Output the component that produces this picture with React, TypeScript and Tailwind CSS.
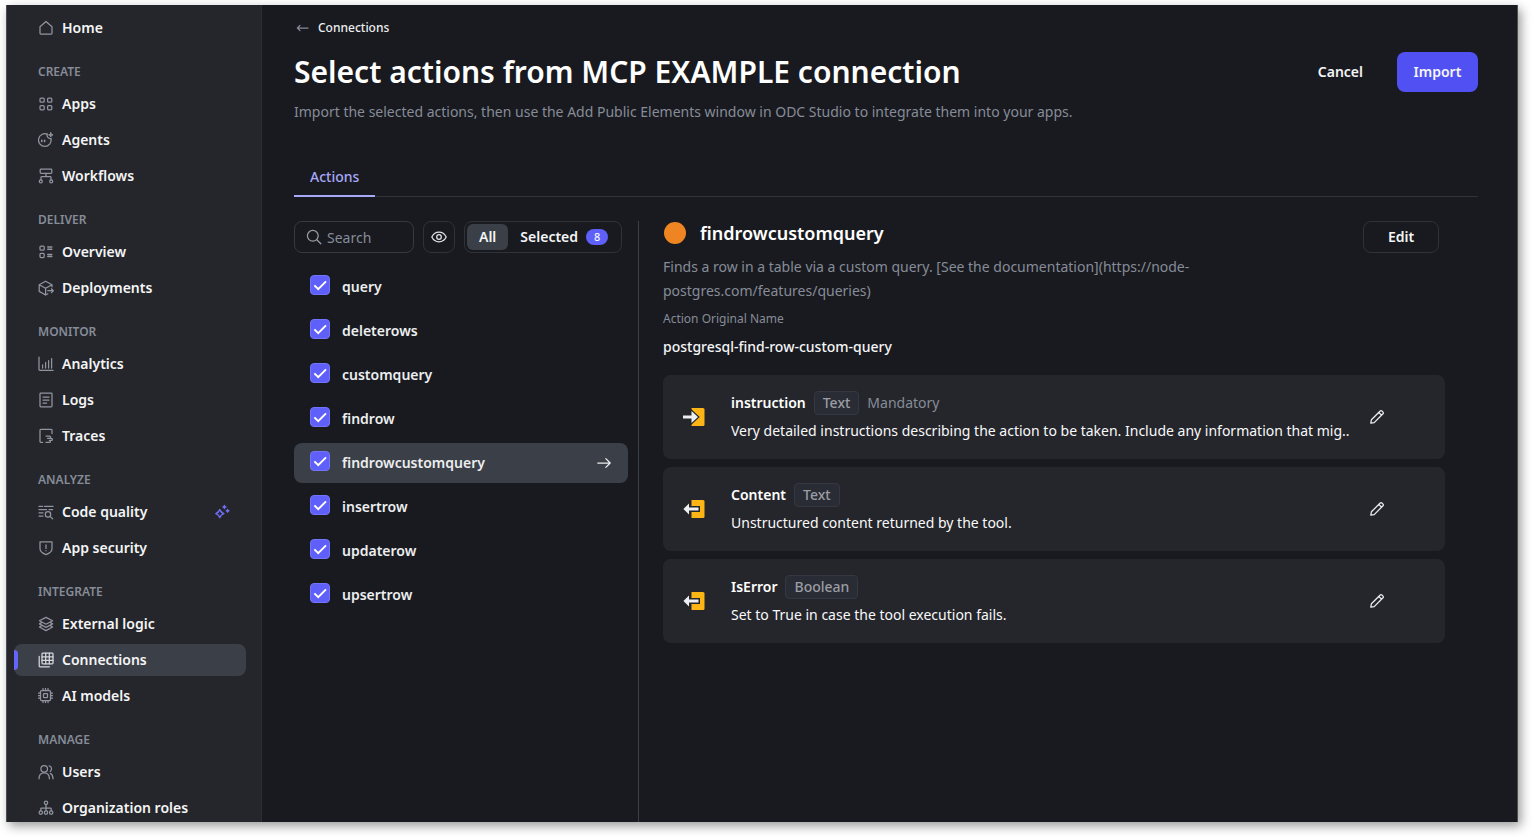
import { useState } from "react";
import type { ReactNode } from "react";

type IconProps = { children: ReactNode; className?: string };

function Icon({ children, className = "size-4" }: IconProps) {
  return (
    <svg
      viewBox="0 0 16 16"
      fill="none"
      stroke="currentColor"
      strokeWidth="1.25"
      strokeLinecap="round"
      strokeLinejoin="round"
      aria-hidden="true"
      className={`shrink-0 ${className}`}
    >
      {children}
    </svg>
  );
}

const icons: Record<string, ReactNode> = {
  home: <path d="M2 6.800 8 1.500l6 5.300v6.400a.8.8 0 0 1-.8.8H2.800a.8.8 0 0 1-.8-.8z" />,
  apps: (
    <>
      <rect x="2" y="2" width="4.2" height="4.2" rx="1" />
      <rect x="9.6" y="2" width="4.2" height="4.2" rx="1" />
      <rect x="2" y="9.6" width="4.2" height="4.2" rx="1" />
      <rect x="9.6" y="9.6" width="4.2" height="4.2" rx="1" />
    </>
  ),
  agents: (
    <>
      <path d="M9.200 2.200A6.300 6.300 0 1 0 13 6.800" />
      <path d="M3.800 8.200v1.400M6.600 8.200v1.400" strokeWidth="1.600" />
      <path d="M12.800 0.600l.7 1.600 1.600.7-1.600.7-.7 1.600-.7-1.600-1.600-.7 1.600-.7z" fill="currentColor" strokeWidth="0.800" />
      <path d="M9.200 2.200c-.8 2 .6 4.200 3.800 4.600" />
    </>
  ),
  workflows: (
    <>
      <rect x="2.2" y="1.2" width="11.6" height="4.2" rx="0.8" />
      <path d="M8 5.400v3.200M3 12V9.400a.8.8 0 0 1 .8-.8h8.400a.8.8 0 0 1 .8.800V12" />
      <circle cx="2.800" cy="13.400" r="1.500" />
      <circle cx="13.200" cy="13.400" r="1.500" />
    </>
  ),
  overview: (
    <>
      <rect x="2" y="2" width="4.2" height="4.2" rx="1" />
      <rect x="2" y="9.400" width="4.2" height="4.2" rx="1" />
      <path d="M9.800 3h4M9.800 5.200h4M9.800 10.400h4M9.800 12.600h4" strokeWidth="1.500" />
    </>
  ),
  deployments: (
    <>
      <path d="M14 6.800V4.800L7.600 1.200 1.200 4.800v6.600l6.400 3.600 2.200-1.200M1.200 4.800l6.400 3.500L14 4.800M7.600 8.300V15" />
      <path d="M9.800 10.700h5.400M13.400 8.800l1.900 1.900-1.900 1.900" />
    </>
  ),
  analytics: <path d="M1 1.200v12.400a.8.8 0 0 0 .8.800H15M4.600 12V8.800M7.600 12V6.400M10.600 12V4.600M13.600 12V2.600" />,
  logs: (
    <>
      <rect x="2" y="1.200" width="12" height="13.600" rx="0.800" />
      <path d="M5 5h6M5 8h6M5 11h3.600" />
    </>
  ),
  traces: (
    <>
      <path d="M4.600 14.400H2.800a.8.8 0 0 1-.8-.8V2.200a.8.8 0 0 1 .8-.8h10.400a.8.8 0 0 1 .8.800v3.400" />
      <path d="M8 8h3.400a1.200 1.200 0 0 1 0 2.400H9.600M11.400 10.400h2a1 1 0 0 1 0 2h-2M8 14.400h3.400a1 1 0 0 0 0-2" />
    </>
  ),
  quality: (
    <>
      <path d="M1 2.400h3.600M6.600 2.400H15M1 5.600h7.600M11 5.600h3.600M1 8.800h4M1 12h4" />
      <circle cx="10" cy="10.400" r="2.700" />
      <path d="m12 12.400 2.600 2.400" />
    </>
  ),
  security: (
    <>
      <path d="M2 1.800h12v6.800c0 3-2.400 4.800-6 6-3.600-1.200-6-3-6-6z" />
      <path d="M8 4.800v3.600M8 10.600v.2" />
    </>
  ),
  logic: (
    <path d="M8 1.400 14.600 4.800 8 8.200 1.400 4.800zM3.600 6.600 1.400 7.900 8 11.400l6.600-3.500-2.200-1.300M3.600 9.800l-2.200 1.200L8 14.600l6.600-3.600-2.200-1.200" />
  ),
  connections: (
    <>
      <rect x="4" y="1.200" width="11" height="10.600" rx="0.800" />
      <path d="M4 4.800h11M4 8.300h11M7.700 1.200v10.600M11.300 1.200v10.600M1.200 4.400v9.600a.8.8 0 0 0 .8.800h9.400" />
    </>
  ),
  models: (
    <>
      <rect x="2.500" y="2.500" width="10" height="10" rx="1" />
      <rect x="5.500" y="5.500" width="4" height="4" rx="0.600" />
      <path d="M5 .5v2M7.500.5v2M10 .5v2M5 12.500v2M7.500 12.500v2M10 12.500v2M.5 5h2M.5 7.500h2M.5 10h2M12.500 5h2M12.500 7.500h2M12.500 10h2" />
    </>
  ),
  users: (
    <>
      <circle cx="6.200" cy="4.800" r="3.300" />
      <path d="M1 14.800c0-4 2-6 5.200-6s5.200 2 5.200 6M11.200 1.800c2.400.4 3.400 3.800 1 5.600M12.400 9.400c1.600.8 2.600 2.400 2.600 5.400" />
    </>
  ),
  roles: (
    <>
      <circle cx="8" cy="2.800" r="1.700" />
      <path d="M8 4.600v6M2.800 10.600V9a.8.800 0 0 1 .8-.8h8.800a.8.800 0 0 1 .8.800v1.600" />
      <circle cx="2.800" cy="12.600" r="1.700" />
      <circle cx="8" cy="12.600" r="1.700" />
      <circle cx="13.200" cy="12.600" r="1.700" />
    </>
  ),
};

type NavItem = { label: string; icon: string; sparkle?: boolean };
type NavGroup = { title?: string; items: NavItem[] };

const groups: NavGroup[] = [
  { items: [{ label: "Home", icon: "home" }] },
  {
    title: "CREATE",
    items: [
      { label: "Apps", icon: "apps" },
      { label: "Agents", icon: "agents" },
      { label: "Workflows", icon: "workflows" },
    ],
  },
  {
    title: "DELIVER",
    items: [
      { label: "Overview", icon: "overview" },
      { label: "Deployments", icon: "deployments" },
    ],
  },
  {
    title: "MONITOR",
    items: [
      { label: "Analytics", icon: "analytics" },
      { label: "Logs", icon: "logs" },
      { label: "Traces", icon: "traces" },
    ],
  },
  {
    title: "ANALYZE",
    items: [
      { label: "Code quality", icon: "quality", sparkle: true },
      { label: "App security", icon: "security" },
    ],
  },
  {
    title: "INTEGRATE",
    items: [
      { label: "External logic", icon: "logic" },
      { label: "Connections", icon: "connections" },
      { label: "AI models", icon: "models" },
    ],
  },
  {
    title: "MANAGE",
    items: [
      { label: "Users", icon: "users" },
      { label: "Organization roles", icon: "roles" },
    ],
  },
];

function Sidebar() {
  return (
    <nav
      aria-label="Main"
      className="w-64 shrink-0 overflow-hidden border-x border-l-[#4b4e54] border-r-[#2c2e34] bg-[#25262b] pt-[7px] pr-[15px] pl-[7px]"
    >
      {groups.map((group) => (
        <section key={group.title ?? "top"}>
          {group.title && (
            <h2 className="mt-3 flex h-8 items-center pl-6 text-xs font-semibold text-[#868c98]">{group.title}</h2>
          )}
          <ul className="flex flex-col gap-1">
            {group.items.map((item) => {
              const active = item.label === "Connections";
              return (
                <li key={item.label}>
                  <a
                    href="#"
                    aria-current={active ? "page" : undefined}
                    className={`relative flex h-8 items-center gap-2 rounded-lg pr-4 pl-6 text-sm font-semibold text-[#f4f5f6] ${
                      active ? "bg-[#3b3f47]" : ""
                    }`}
                  >
                    {active && <span className="absolute top-[6px] left-0 h-5 w-1 rounded-r bg-[#6565fb]" />}
                    <span className={active ? "text-[#d5d8dd]" : "text-[#9195a0]"}>
                      <Icon>{icons[item.icon]}</Icon>
                    </span>
                    <span className="flex-1">{item.label}</span>
                    {item.sparkle && (
                      <span className="text-[#6f6ff5]">
                        <Icon>
                          <path
                            d="M5.800 5.600Q6.800 8.600 9.800 9.600 6.800 10.600 5.800 13.600 4.800 10.600 1.800 9.600 4.800 8.600 5.800 5.600z"
                            strokeWidth="1.500"
                          />
                          <path
                            d="M10.400 1.400l.5 1.100 1.100.5-1.100.5-.5 1.100-.5-1.100-1.100-.5 1.100-.5zM13.600 5.400l.4 1 1 .4-1 .4-.4 1-.4-1-1-.4 1-.4z"
                            fill="currentColor"
                          />
                        </Icon>
                      </span>
                    )}
                  </a>
                </li>
              );
            })}
          </ul>
        </section>
      ))}
    </nav>
  );
}

const actions = [
  "query",
  "deleterows",
  "customquery",
  "findrow",
  "findrowcustomquery",
  "insertrow",
  "updaterow",
  "upsertrow",
];

function ActionList() {
  const [checked, setChecked] = useState<string[]>(actions);
  const toggle = (name: string) =>
    setChecked((now) => (now.includes(name) ? now.filter((n) => n !== name) : [...now, name]));

  return (
    <section aria-label="Actions" className="w-[345px] shrink-0 border-r border-[#3a3e46] pr-[10px]">
      <div className="flex h-8 gap-[9px]">
        <label className="flex w-[120px] items-center gap-[5px] rounded-lg border border-[#363940] pl-[11px] text-[#989ca5]">
          <Icon>
            <circle cx="6.800" cy="6.800" r="5.400" />
            <path d="m10.800 10.800 4 4" />
          </Icon>
          <input
            type="text"
            aria-label="Search"
            placeholder="Search"
            className="h-[30px] w-full min-w-0 bg-transparent pt-px text-sm text-white outline-none placeholder:text-[#868c98]"
          />
        </label>
        <button
          type="button"
          aria-label="Show details"
          className="flex w-8 items-center justify-center rounded-lg border border-[#2f3238] text-[#e3e5e8]"
        >
          <Icon>
            <path d="M.8 8C2.400 4.800 5 3.200 8 3.200S13.600 4.800 15.200 8c-1.600 3.200-4.200 4.800-7.200 4.800S2.400 11.200.8 8z" />
            <circle cx="8" cy="8" r="2.300" />
          </Icon>
        </button>
        <div className="flex w-[158px] items-center rounded-lg border border-[#2f3238] p-[2px] text-sm font-semibold text-[#f4f5f6]">
          <button type="button" className="h-[26px] rounded-md bg-[#3b3f47] px-3">
            All
          </button>
          <button type="button" className="flex h-[26px] flex-1 items-center gap-2 pl-3">
            Selected
            <span className="flex h-4 w-[22px] items-center justify-center rounded-full bg-[#5f5ffa] text-[11px] font-medium">
              {checked.length}
            </span>
          </button>
        </div>
      </div>
      <ul className="mt-[14px] flex flex-col gap-1">
        {actions.map((name) => {
          const current = name === "findrowcustomquery";
          return (
            <li
              key={name}
              className={`flex h-10 items-center justify-between rounded-lg px-4 text-[#eceef0] ${
                current ? "bg-[#3b3f47]" : ""
              }`}
            >
              <label className="flex items-center gap-3 text-sm font-semibold">
                <span className="grid pb-1">
                  <input
                    type="checkbox"
                    checked={checked.includes(name)}
                    onChange={() => toggle(name)}
                    className="peer col-start-1 row-start-1 size-5 appearance-none rounded border border-[#7474fb] checked:bg-[#5f5ffa]"
                  />
                  <svg
                    viewBox="0 0 20 20"
                    fill="none"
                    stroke="#ffffff"
                    strokeWidth="2"
                    aria-hidden="true"
                    className="pointer-events-none invisible col-start-1 row-start-1 size-5 peer-checked:visible"
                  >
                    <path d="m4.400 10.400 3.800 3.800 7.800-7.800" />
                  </svg>
                </span>
                {name}
              </label>
              {current && (
                <Icon>
                  <path d="M1.800 8h12.400M9.800 3.600 14.200 8l-4.400 4.400" />
                </Icon>
              )}
            </li>
          );
        })}
      </ul>
    </section>
  );
}

function InputArrow() {
  return (
    <svg viewBox="0 0 24 24" aria-hidden="true" className="size-6 shrink-0">
      <path d="M8.500 3H20a1.500 1.500 0 0 1 1.500 1.500v15A1.500 1.500 0 0 1 20 21H8.500z" fill="#fdb515" />
      <path
        d="M0 10.600h8.500V6L15 12l-6.500 6v-4.600H0z"
        fill="#eceef0"
        stroke="#25262b"
        strokeWidth="2.400"
        paintOrder="stroke"
      />
    </svg>
  );
}

function OutputArrow() {
  return (
    <svg viewBox="0 0 24 24" aria-hidden="true" className="size-6 shrink-0">
      <path d="M8.500 3H20a1.500 1.500 0 0 1 1.500 1.500v15A1.500 1.500 0 0 1 20 21H8.500z" fill="#fdb515" />
      <path
        d="M.4 12 6 6.400v4.200h9.500v2.800H6v4.200z"
        fill="#eceef0"
        stroke="#25262b"
        strokeWidth="3"
        paintOrder="stroke"
      />
    </svg>
  );
}

const params = [
  {
    name: "instruction",
    type: "Text",
    note: "Mandatory",
    input: true,
    text: "Very detailed instructions describing the action to be taken. Include any information that mig..",
  },
  { name: "Content", type: "Text", note: "", input: false, text: "Unstructured content returned by the tool." },
  { name: "IsError", type: "Boolean", note: "", input: false, text: "Set to True in case the tool execution fails." },
];

function ActionDetails() {
  return (
    <section aria-label="Action details" className="min-w-0 flex-1 pr-[33px] pl-6">
      <div className="flex items-start justify-between pr-[6px]">
        <div>
          <h2 className="flex h-6 items-center gap-[14px] text-lg font-semibold text-white">
            <span className="ml-px size-[22px] rounded-full bg-[#ee8522]" />
            findrowcustomquery
          </h2>
          <p className="mt-[10px] max-w-[560px] text-sm leading-6 text-[#868c98]">
            Finds a row in a table via a custom query. [See the documentation](https://node-postgres.com/features/queries)
          </p>
        </div>
        <button
          type="button"
          className="h-8 w-[76px] rounded-lg border border-[#2f3238] text-sm font-semibold text-[#f4f5f6]"
        >
          Edit
        </button>
      </div>
      <dl>
        <dt className="mt-1 text-xs leading-6 text-[#868c98]">Action Original Name</dt>
        <dd className="mt-1 text-sm leading-6 font-medium text-[#f4f5f6]">postgresql-find-row-custom-query</dd>
      </dl>
      <ul className="mt-4 flex flex-col gap-2">
        {params.map((p) => (
          <li key={p.name} className="flex items-center gap-6 rounded-lg bg-[#25262b] py-4 pr-[60px] pl-5">
            {p.input ? <InputArrow /> : <OutputArrow />}
            <div className="min-w-0 flex-1">
              <div className="flex h-6 items-center gap-2 text-sm">
                <h3 className="font-semibold text-white">{p.name}</h3>
                <span className="flex h-6 items-center rounded border border-[#343842] bg-[#2a2c35] px-2 font-medium text-[#9a9da3]">
                  {p.type}
                </span>
                {p.note && <span className="text-[#868c98]">{p.note}</span>}
              </div>
              <p className="mt-1 truncate text-sm leading-6 text-[#f8f9fa]">{p.text}</p>
            </div>
            <button type="button" aria-label={`Edit ${p.name}`} className="-ml-6 text-[#eceef0]">
              <Icon>
                <path d="M1.800 14.200l.6-3.400 8.800-8.800a1.200 1.200 0 0 1 1.700 0l1.100 1.100a1.200 1.200 0 0 1 0 1.700l-8.800 8.800zM9.800 3.400l2.800 2.800" />
              </Icon>
            </button>
          </li>
        ))}
      </ul>
    </section>
  );
}

export default function App() {
  return (
    <div className="flex h-screen bg-white pt-[5px] pr-4 pb-[15px] pl-[6px] font-['Noto_Sans',sans-serif]">
      <div className="flex min-w-0 flex-1 overflow-hidden bg-[#191a1f] shadow-[3px_4px_10px_rgba(0,0,0,0.4)]">
        <Sidebar />
        <main className="flex min-w-0 flex-1 flex-col border-r border-[#4b4e54] pt-[11px] pr-[39px] pl-8">
          <a href="#" className="flex h-6 items-center gap-2 self-start text-xs font-medium text-[#eceef0]">
            <span className="text-[#868c98]">
              <Icon>
                <path d="M3.400 8H14M6 5.400 3.400 8 6 10.600" />
              </Icon>
            </span>
            Connections
          </a>
          <header className="mt-3 flex h-10 items-center justify-between">
            <h1 className="text-3xl font-semibold text-white">Select actions from MCP EXAMPLE connection</h1>
            <div className="flex gap-4 text-sm font-semibold text-[#f4f5f6]">
              <button type="button" className="h-10 px-[18px]">
                Cancel
              </button>
              <button type="button" className="h-10 w-[81px] rounded-lg bg-[#5151f3]">
                Import
              </button>
            </div>
          </header>
          <p className="mt-2 text-sm leading-6 text-[#868c98]">
            Import the selected actions, then use the Add Public Elements window in ODC Studio to integrate them into
            your apps.
          </p>
          <div role="tablist" className="mt-[33px] flex h-10 border-b border-[#2f3238]">
            <button
              type="button"
              role="tab"
              aria-selected="true"
              className="-mb-px border-b-2 border-[#a8a8f8] px-4 pt-[2px] text-sm font-medium text-[#a8a8f8]"
            >
              Actions
            </button>
          </div>
          <div className="mt-6 flex min-h-0 flex-1">
            <ActionList />
            <ActionDetails />
          </div>
        </main>
      </div>
    </div>
  );
}
